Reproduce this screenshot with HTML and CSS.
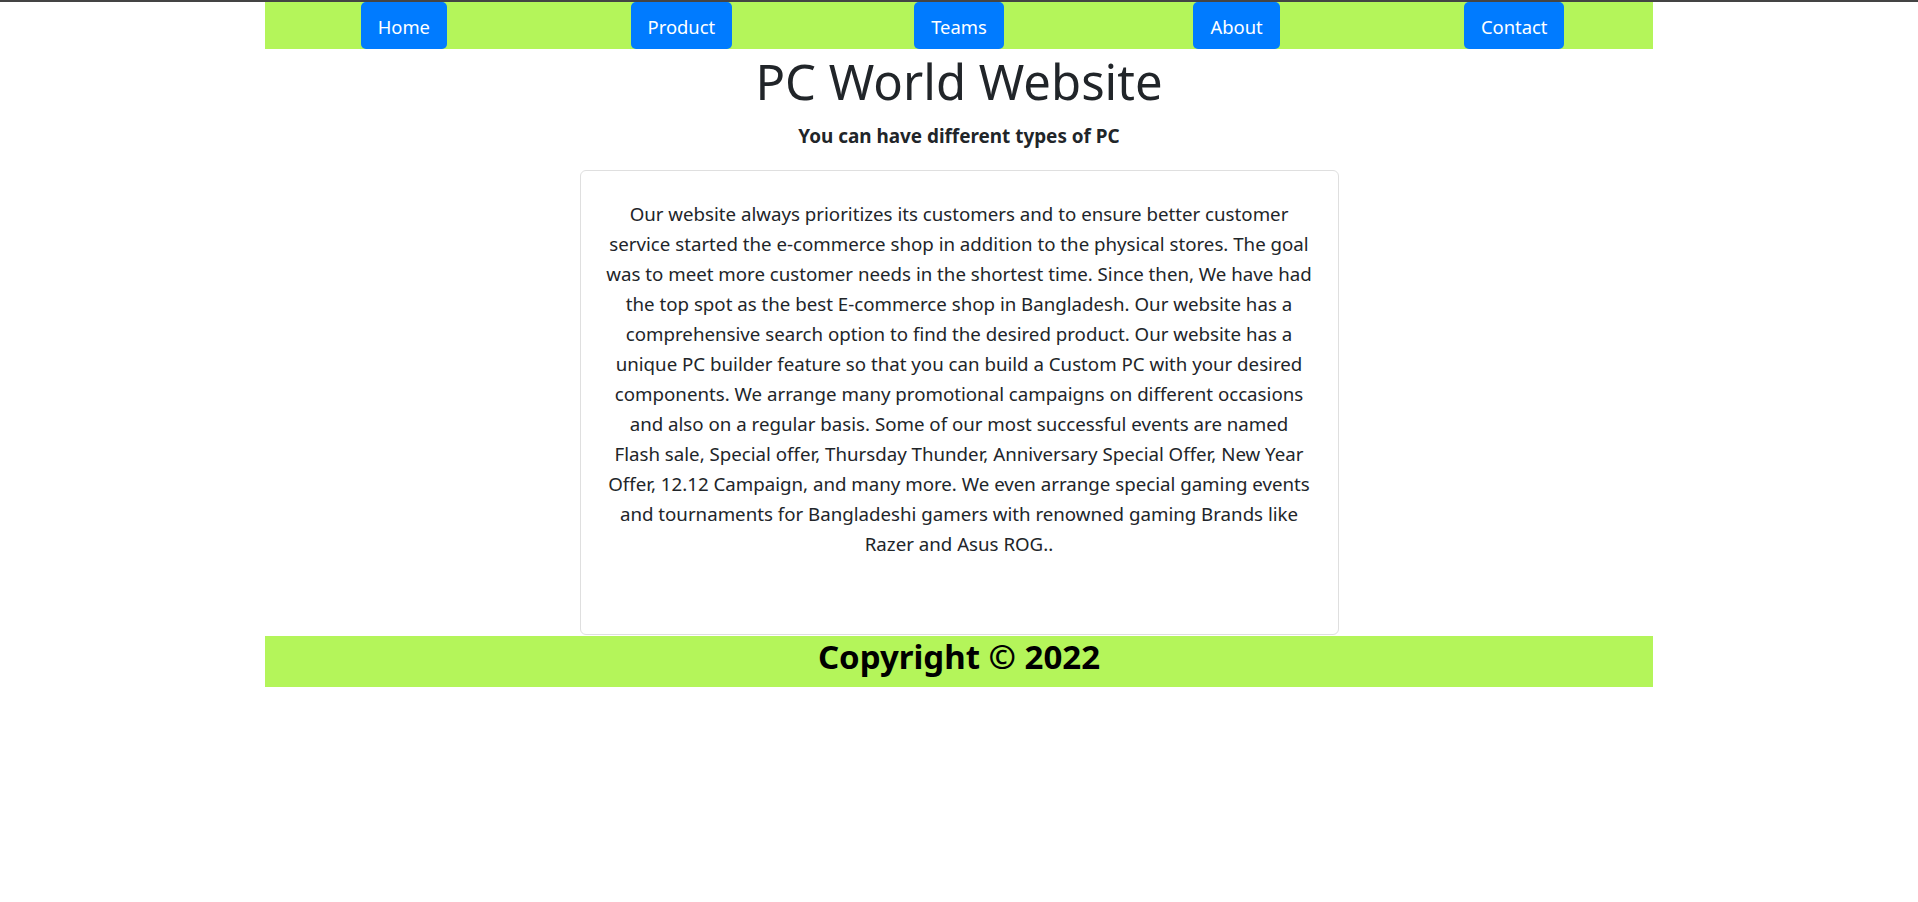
FILE: index.html
```html
<!DOCTYPE html>
<html lang="en">
<head>
<meta charset="utf-8">
<title>PC World Website</title>
<link rel="stylesheet" href="styles.css">
</head>
<body>
<div class="topline"></div>
<nav class="nav">
  <div class="nav-cell"><a class="btn" href="#">Home</a></div>
  <div class="nav-cell"><a class="btn" href="#">Product</a></div>
  <div class="nav-cell"><a class="btn" href="#">Teams</a></div>
  <div class="nav-cell"><a class="btn" href="#">About</a></div>
  <div class="nav-cell"><a class="btn" href="#">Contact</a></div>
</nav>
<header class="hero">
  <h1 class="title">PC World Website</h1>
  <h5 class="subtitle">You can have different types of PC</h5>
</header>
<main class="card">
  <p class="card-text">Our website always prioritizes its customers and to ensure better customer<br>
service started the e-commerce shop in addition to the physical stores. The goal<br>
was to meet more customer needs in the shortest time. Since then, We have had<br>
the top spot as the best E-commerce shop in Bangladesh. Our website has a<br>
comprehensive search option to find the desired product. Our website has a<br>
unique PC builder feature so that you can build a Custom PC with your desired<br>
components. We arrange many promotional campaigns on different occasions<br>
and also on a regular basis. Some of our most successful events are named<br>
Flash sale, Special offer, Thursday Thunder, Anniversary Special Offer, New Year<br>
Offer, 12.12 Campaign, and many more. We even arrange special gaming events<br>
and tournaments for Bangladeshi gamers with renowned gaming Brands like<br>
Razer and Asus ROG..</p>
</main>
<footer class="footer">
  <h2 class="copyright">Copyright © 2022</h2>
</footer>
</body>
</html>
```
FILE: styles.css
```css
* { box-sizing: border-box; }
html, body { margin: 0; padding: 0; background: #fff; }
body {
  font-family: "Noto Sans", "Open Sans", sans-serif;
  color: #212529;
}
.topline { height: 2px; background: #444; }
.nav {
  width: 1388px;
  margin: 0 auto;
  height: 47px;
  background: #b4f55a;
  display: grid;
  grid-template-columns: repeat(5, 1fr);
}
.nav-cell { display: flex; justify-content: center; }
.btn {
  display: block;
  height: 47px;
  padding: 2px 17px 0;
  line-height: 45px;
  font-size: 18.4px;
  color: #fff;
  background: #007bff;
  border-radius: 5px;
  text-decoration: none;
}
.hero { text-align: center; }
.title {
  margin: 3px 0 0;
  font-size: 49px;
  font-weight: 400;
  line-height: 1.2;
  color: #212529;
}
.subtitle {
  margin: 14px 0 0;
  font-size: 18.9px;
  font-weight: 700;
  line-height: 1.2;
  color: #212529;
}
.card {
  display: block;
  width: 759px;
  margin: 23px auto 0;
  border: 1px solid #dfdfdf;
  border-radius: 6px;
  padding: 28px 12px 75px;
}
.card-text {
  margin: 0;
  font-size: 18.7px;
  line-height: 30px;
  text-align: center;
  color: #212529;
}
.footer {
  width: 1388px;
  margin: 1px auto 0;
  background: #b4f55a;
  height: 51px;
  text-align: center;
  padding-bottom: 9px;
}
.copyright {
  margin: 0;
  font-size: 33px;
  font-weight: 700;
  line-height: 42px;
  color: #000;
}
```
